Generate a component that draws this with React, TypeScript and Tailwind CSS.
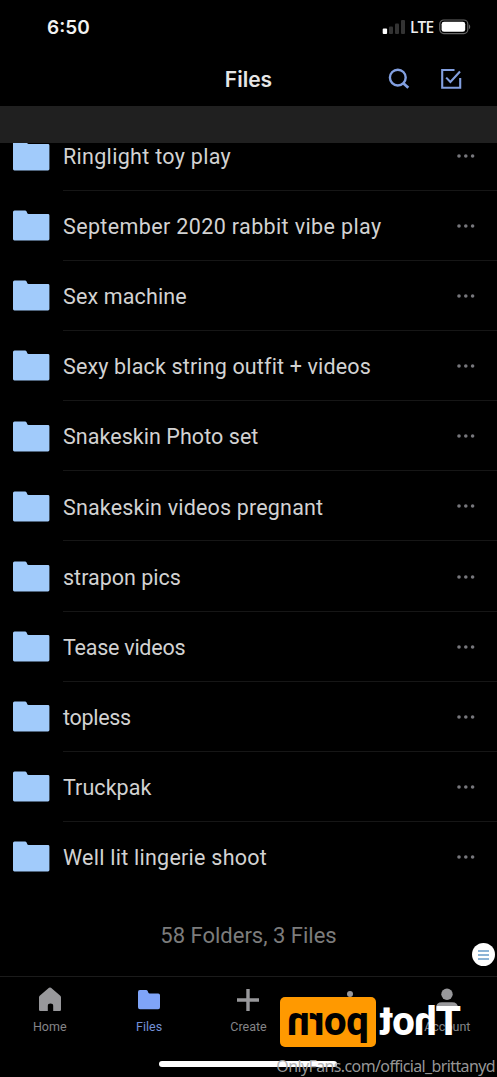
import type { ReactNode } from "react";

const FOLDERS = [
  { name: "Ringlight toy play", tracking: "tracking-[0.3px]" },
  { name: "September 2020 rabbit vibe play", tracking: "tracking-[0.37px]" },
  { name: "Sex machine", tracking: "tracking-[0.14px]" },
  { name: "Sexy black string outfit + videos", tracking: "tracking-[0.15px]" },
  { name: "Snakeskin Photo set", tracking: "tracking-[0.05px]" },
  { name: "Snakeskin videos pregnant", tracking: "tracking-[0.18px]" },
  { name: "strapon pics", tracking: "tracking-[0px]" },
  { name: "Tease videos", tracking: "tracking-[-0.25px]" },
  { name: "topless", tracking: "tracking-[-0.3px]" },
  { name: "Truckpak", tracking: "tracking-[0.05px]" },
  { name: "Well lit lingerie shoot", tracking: "tracking-[0.25px]" },
];

function StatusBar() {
  return (
    <div className="flex h-[54px] items-center justify-between pr-[26px] pl-[47px]">
      <span className="pt-0.5 font-['Inter',sans-serif] text-[19px] font-semibold text-[#f2f2f2]">
        6:50
      </span>
      <div className="flex items-center">
        <svg width="24" height="16" viewBox="0 0 24 16">
          <rect x="0.7" y="9.5" width="4.4" height="5.5" rx="1" fill="#fff" />
          <rect x="7" y="7.5" width="4" height="7.5" rx="1" fill="#333" />
          <rect x="13" y="4.5" width="4" height="10.5" rx="1" fill="#333" />
          <rect x="19" y="1" width="4" height="14" rx="1" fill="#333" />
        </svg>
        <span className="ml-1 w-[23px] pt-0.5 font-['Open_Sans',sans-serif] text-[15.5px] leading-none font-semibold tracking-[-0.9px] text-[#eee]">
          LTE
        </span>
        <svg className="ml-1.5" width="32" height="16" viewBox="0 0 32 16">
          <rect x="0.8" y="1" width="28" height="13.6" rx="4" fill="none" stroke="#666" strokeWidth="1.2" />
          <rect x="2.6" y="2.8" width="23.6" height="10" rx="2.4" fill="#fff" />
          <path d="M30 5.5c1.6.6 1.6 4 0 4.6z" fill="#666" />
        </svg>
      </div>
    </div>
  );
}

function Header() {
  return (
    <div className="grid h-[52px] grid-cols-[1fr_auto_1fr] items-center">
      <span />
      <h1 className="font-['Inter',sans-serif] text-[21px] font-semibold text-[#e6e6e6]">
        Files
      </h1>
      <div className="flex items-center justify-end gap-[30px] pr-[35px] pb-0.5">
        <svg width="22" height="22" viewBox="0 0 22 22" fill="none" stroke="#829fe0" strokeWidth="2.4">
          <circle cx="9.8" cy="9.6" r="7.9" />
          <path d="M15.3 15.2l5 4.6" strokeWidth="2.8" />
        </svg>
        <svg width="22" height="22" viewBox="0 0 22 22" fill="none" stroke="#829fe0" strokeWidth="2.1">
          <path d="M14.5 2H2.2v17.8h18V10" />
          <path d="M6.2 9.6l4.200 4.400L20 3.500" />
        </svg>
      </div>
    </div>
  );
}

function FolderRow({ name, tracking, last }: { name: string; tracking: string; last: boolean }) {
  return (
    <li className="flex h-[70.15px] items-stretch pl-[13px]">
      <svg className="mt-[19.400px] shrink-0" width="37" height="31" viewBox="0 0 37 31">
        <path
          d="M0 2Q0 .5 1.5.5H12q1.2 0 1.6 1l.6 1.6q.3.9 1.4.9H35q1.4 0 1.4 1.4V29q0 1.4-1.4 1.4H1.4Q0 30.4 0 29z"
          fill="#a1cbfb"
        />
      </svg>
      <div
        className={`ml-[13px] flex flex-1 items-center justify-between border-b pt-[3px] pr-[22px] ${
          last ? "border-transparent" : "border-[#161616]"
        }`}
      >
        <span
          className={`font-['Roboto',sans-serif] text-[21.5px] leading-none whitespace-nowrap text-[#d2d2d2] ${tracking}`}
        >
          {name}
        </span>
        <svg className="mb-0.5" width="18" height="4" viewBox="0 0 18 4" fill="#77777c">
          <circle cx="2" cy="2" r="1.8" />
          <circle cx="8.8" cy="2" r="1.8" />
          <circle cx="15.6" cy="2" r="1.8" />
        </svg>
      </div>
    </li>
  );
}

function Tab({ label, active, children }: { label?: string; active?: boolean; children: ReactNode }) {
  return (
    <div
      className={`flex flex-col items-center pt-2.5 ${active ? "text-[#7fa4f8]" : "text-[#98989b]"}`}
    >
      <svg width="26" height="26" viewBox="0 0 26 26" fill="currentColor">
        {children}
      </svg>
      {label && (
        <span
          className={`mt-1.5 font-['Roboto',sans-serif] text-[12.5px] leading-[15px] ${
            active ? "text-[#7390d8]" : "text-[#858588]"
          }`}
        >
          {label}
        </span>
      )}
    </div>
  );
}

function TabBar() {
  return (
    <nav className="grid h-[101px] grid-cols-5 border-t border-[#1b1b1b]">
      <Tab label="Home">
        <path d="M2 10.2Q2 9.4 2.7 8.8L12 .8q1-.8 2 0l9.3 8q.7.6.7 1.4V22.7q0 1.3-1.3 1.3h-6.5v-5.2q0-2.4-2.7-2.4t-2.7 2.4V24H3.3Q2 24 2 22.7z" />
      </Tab>
      <Tab label="Files" active>
        <path d="M2 5q0-2 1.8-2H10q1.3 0 1.8 1.2l.6 1.5q.3.7 1.2.7h8.6q1.8 0 1.8 1.8v12q0 2-1.8 2H4q-2 0-2-2z" />
      </Tab>
      <Tab label="Create">
        <path d="M11.3 2h3.4v9.3H24v3.4h-9.3V24h-3.4v-9.3H2v-3.4h9.3z" />
      </Tab>
      <Tab>
        <circle cx="15" cy="7" r="3" />
      </Tab>
      <Tab label="Account">
        <circle cx="13" cy="7.3" r="5.7" />
        <path d="M2 24v-3q0-5.7 6-5.7h10q6 0 6 5.7v3z" />
      </Tab>
    </nav>
  );
}

export default function App() {
  return (
    <div className="relative flex h-[1077px] w-[497px] flex-col overflow-hidden bg-black">
      <StatusBar />
      <Header />
      <div className="h-[37px] shrink-0 bg-[#202020]" />

      <main className="min-h-0 flex-1 overflow-hidden">
        <ul className="-mt-[22.4px]">
          {FOLDERS.map((f, i) => (
            <FolderRow key={f.name} {...f} last={i === FOLDERS.length - 1} />
          ))}
        </ul>
        <p className="mt-[29.4px] text-center font-['Roboto',sans-serif] text-[22px] leading-7 text-[#7c7c7c]">
          58 Folders, 3 Files
        </p>
      </main>

      <TabBar />

      {/* home indicator */}
      <div className="absolute bottom-[10px] left-[159px] h-[6px] w-[178px] rounded-full bg-white" />

      {/* scroll handle */}
      <div className="absolute top-[943px] left-[472px] flex size-[23px] flex-col items-center justify-center gap-[2px] rounded-full bg-white">
        <div className="h-[2px] w-[11px] bg-[#8db4d6]" />
        <div className="h-[2px] w-[11px] bg-[#8db4d6]" />
        <div className="h-[2px] w-[11px] bg-[#8db4d6]" />
      </div>

      {/* mirrored watermark */}
      <div className="absolute top-[997px] left-[280px] flex -scale-x-100 items-center font-['Roboto',sans-serif] text-[40px] leading-none font-extrabold">
        <span className="w-[85px] tracking-[-0.6px] whitespace-nowrap text-white">Thot</span>
        <span className="flex h-[50px] w-[96px] items-center justify-center rounded-[5px] bg-[#ff9900] tracking-[-0.3px] text-black">
          porn
        </span>
      </div>
      <div className="absolute right-[2px] bottom-0 font-['Noto_Sans',sans-serif] text-[16px] leading-[22px] tracking-[-0.62px] whitespace-nowrap text-[#aaaaaa]/90">
        OnlyFans.com/official_brittanyd
      </div>
    </div>
  );
}
